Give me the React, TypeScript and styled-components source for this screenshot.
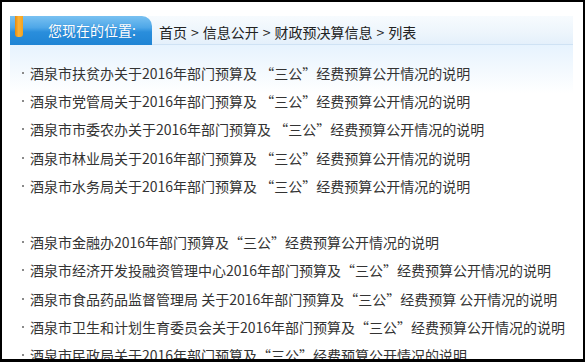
import React from "react";
import styled, { createGlobalStyle } from "styled-components";

const GlobalStyle = createGlobalStyle`
  html, body { margin: 0; padding: 0; background: #fff; }
  body { font-family: "Noto Sans CJK SC", "Noto Sans", sans-serif; }
  * { box-sizing: border-box; }
`;

const Frame = styled.div`
  width: 585px;
  height: 362px;
  border: 2px solid #000;
  border-bottom-width: 3px;
  background: #fff;
  overflow: hidden;
  padding: 14px 10px 0 8px;
`;

const Header = styled.div`
  display: flex;
  height: 29px;
`;

const Tab = styled.div`
  position: relative;
  display: flex;
  align-items: flex-start;
  width: 142px;
  height: 29px;
  border-top-right-radius: 10px;
  background: linear-gradient(180deg, #79c1f1 0%, #4ea7e8 40%, #2a8edc 55%, #1f84d4 100%);
`;

const Mark = styled.span`
  display: block;
  width: 8px;
  height: 21px;
  margin-left: 5px;
  border-radius: 0 0 3px 3px;
  background: linear-gradient(90deg, #e88a0c 0%, #fbb33a 45%, #f5a21c 100%);
`;

const TabLabel = styled.span`
  margin: 5px 0 0 25px;
  color: #fff;
  font-size: 14px;
  line-height: 18px;
  text-shadow: 0 0 1px rgba(20, 80, 150, 0.4);
`;

const Crumb = styled.div`
  flex: 1;
  display: flex;
  align-items: center;
  padding: 4px 0 0 11px;
  margin-left: -4px;
  background: linear-gradient(180deg, #f7fbfe 0%, #edf5fc 60%, #e4f0fb 100%);
  border-bottom: 1px solid #cfe2f4;
  color: #222;
  font-size: 14px;
`;

const Sep = styled.span`
  margin: 0 4px;
`;

const Body = styled.div`
  background: linear-gradient(180deg, #e7f3fe 0px, #f3f9fe 25px, #ffffff 48px);
  padding: 14px 0 0 12px;
`;

const List = styled.ul`
  list-style: none;
  margin: 0;
  padding: 0;
`;

const Item = styled.li<{ $blank?: boolean }>`
  display: flex;
  align-items: center;
  height: 28.2px;
  font-size: 14px;
  color: #333;
  white-space: nowrap;
  &::before {
    content: "";
    display: ${(p) => (p.$blank ? "none" : "block")};
    width: 2px;
    height: 2px;
    margin-right: 6px;
    background: #8a8a8a;
  }
`;

const items: (string | null)[] = [
  "酒泉市扶贫办关于2016年部门预算及 “三公”经费预算公开情况的说明",
  "酒泉市党管局关于2016年部门预算及 “三公”经费预算公开情况的说明",
  "酒泉市市委农办关于2016年部门预算及 “三公”经费预算公开情况的说明",
  "酒泉市林业局关于2016年部门预算及 “三公”经费预算公开情况的说明",
  "酒泉市水务局关于2016年部门预算及 “三公”经费预算公开情况的说明",
  null,
  "酒泉市金融办2016年部门预算及“三公”经费预算公开情况的说明",
  "酒泉市经济开发投融资管理中心2016年部门预算及“三公”经费预算公开情况的说明",
  "酒泉市食品药品监督管理局 关于2016年部门预算及“三公”经费预算 公开情况的说明",
  "酒泉市卫生和计划生育委员会关于2016年部门预算及“三公”经费预算公开情况的说明",
  "酒泉市民政局关于2016年部门预算及“三公”经费预算公开情况的说明",
];

const crumbs = ["首页", "信息公开", "财政预决算信息", "列表"];

export default function App() {
  return (
    <>
      <GlobalStyle />
      <Frame>
        <Header>
          <Tab>
            <Mark />
            <TabLabel>您现在的位置:</TabLabel>
          </Tab>
          <Crumb>
            {crumbs.map((c, i) => (
              <React.Fragment key={c}>
                {i > 0 && <Sep>&gt;</Sep>}
                <span>{c}</span>
              </React.Fragment>
            ))}
          </Crumb>
        </Header>
        <Body>
          <List>
            {items.map((t, i) => (
              <Item key={i} $blank={t === null}>
                {t ?? ""}
              </Item>
            ))}
          </List>
        </Body>
      </Frame>
    </>
  );
}
